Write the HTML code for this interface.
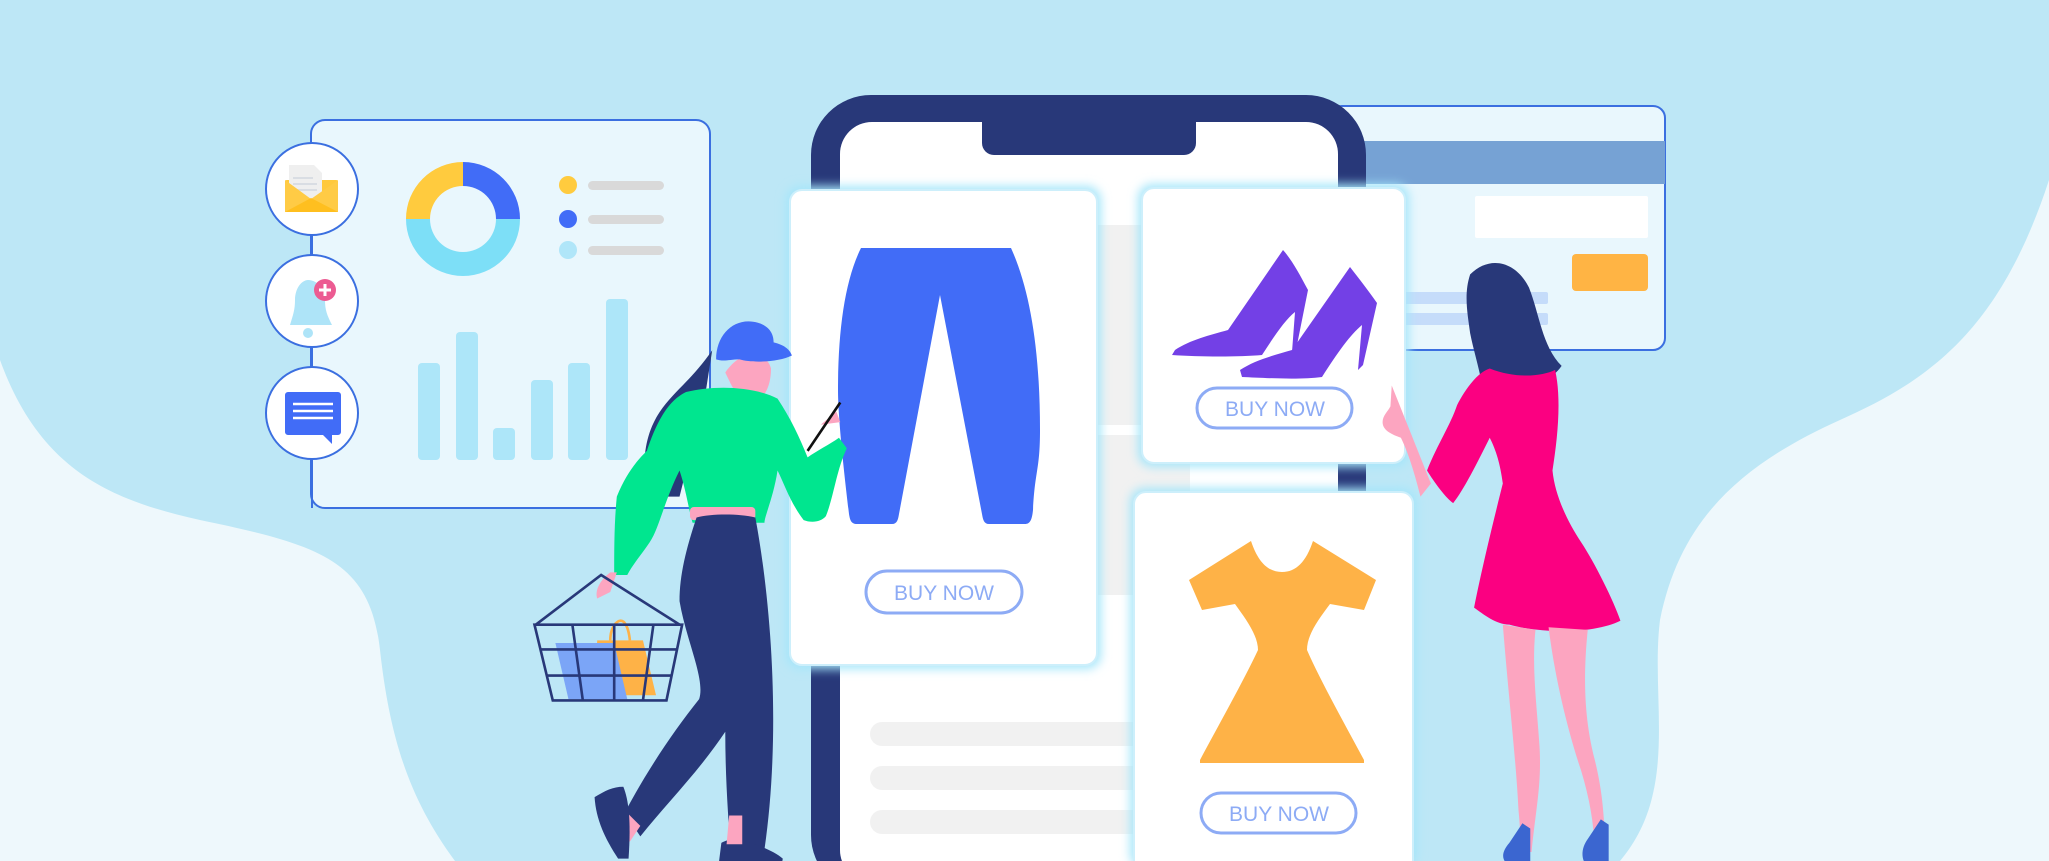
<!DOCTYPE html>
<html><head><meta charset="utf-8"><style>
html,body{margin:0;padding:0;background:#bde7f6;}
svg{display:block}
text{font-family:"Liberation Sans",sans-serif}
</style></head><body>
<svg width="2049" height="861" viewBox="0 0 2049 861" xmlns="http://www.w3.org/2000/svg">
<defs>
<filter id="glow" x="-10%" y="-10%" width="120%" height="120%"><feGaussianBlur stdDeviation="5"/></filter>
</defs>
<rect width="2049" height="861" fill="#bde7f6"/>
<path d="M0 360 C40 470 110 500 200 520 C320 545 370 560 380 650 C390 740 410 800 455 861 L0 861 Z" fill="#eef8fc"/>
<path d="M2049 180 C2000 330 1930 380 1840 420 C1740 465 1680 520 1660 620 C1650 700 1680 790 1620 861 L2049 861 Z" fill="#eef8fc"/>

<rect x="311" y="120" width="399" height="388" rx="14" fill="#e9f7fd" stroke="#3b6fe0" stroke-width="2"/>
<line x1="312" y1="189" x2="312" y2="508" stroke="#3b6fe0" stroke-width="2"/>
<g fill="#fff" stroke="#3b6fe0" stroke-width="2">
<circle cx="312" cy="189" r="46"/><circle cx="312" cy="301" r="46"/><circle cx="312" cy="413" r="46"/>
</g>
<rect x="285" y="180" width="53" height="32" rx="2" fill="#ffc93c"/>
<path d="M289 165 h25 l8 8 v27 h-33z" fill="#efefef"/>
<path d="M293 178h20M293 184h24M293 190h24" stroke="#d9dde3" stroke-width="2"/>
<path d="M285 180 L311 199 L338 180 L338 212 L285 212Z" fill="#ffcb45"/>
<path d="M285 212 L311 198 L338 212 Z" fill="#ffbf1f"/>
<path d="M290 325 C293 315 295 310 295 300 C295 288 302 280 308 280 C318 280 325 290 325 300 C325 310 327 315 332 325 Z" fill="#aee4f8"/>
<circle cx="308" cy="333" r="5" fill="#aee4f8"/>
<circle cx="325" cy="290" r="11" fill="#ec5b92"/>
<path d="M325 284v12M319 290h12" stroke="#fff" stroke-width="3"/>
<path d="M288 392 h50 a3 3 0 0 1 3 3 v37 a3 3 0 0 1 -3 3 h-6 l0 9 -9 -9 h-35 a3 3 0 0 1 -3 -3 v-37 a3 3 0 0 1 3 -3z" fill="#416cf7"/>
<path d="M293 404h40M293 411h40M293 418h40" stroke="#fff" stroke-width="2.5"/>
<g transform="translate(463,219)">
<path d="M0 -57 A57 57 0 0 1 57 0 L33 0 A33 33 0 0 0 0 -33Z" fill="#416cf7"/>
<path d="M0 -57 A57 57 0 0 0 -57 0 L-33 0 A33 33 0 0 1 0 -33Z" fill="#ffcb3e"/>
<path d="M-57 0 A57 57 0 0 0 57 0 L33 0 A33 33 0 0 1 -33 0Z" fill="#7ddff7"/>
</g>
<circle cx="568" cy="185" r="9" fill="#ffcb3e"/><circle cx="568" cy="219" r="9" fill="#416cf7"/><circle cx="568" cy="250" r="9" fill="#b0e6f9"/>
<g fill="#d9d9d9"><rect x="588" y="181" width="76" height="9" rx="4.5"/><rect x="588" y="215" width="76" height="9" rx="4.5"/><rect x="588" y="246" width="76" height="9" rx="4.5"/></g>
<g fill="#ade6f9">
<rect x="418" y="363" width="22" height="97" rx="4"/><rect x="456" y="332" width="22" height="128" rx="4"/>
<rect x="493" y="428" width="22" height="32" rx="4"/><rect x="531" y="380" width="22" height="80" rx="4"/>
<rect x="568" y="363" width="22" height="97" rx="4"/><rect x="606" y="299" width="22" height="161" rx="4"/>
</g>

<rect x="1330" y="106" width="335" height="244" rx="12" fill="#e9f7fd" stroke="#3b6fe0" stroke-width="2"/>
<rect x="1330" y="141" width="335" height="43" fill="#76a2d4"/>
<rect x="1475" y="196" width="173" height="42" rx="2" fill="#fff"/>
<rect x="1572" y="254" width="76" height="37" rx="4" fill="#ffb444"/>
<rect x="1400" y="292" width="148" height="12" rx="2" fill="#c5dcfa"/><rect x="1400" y="313" width="148" height="12" rx="2" fill="#c5dcfa"/>

<rect x="811" y="95" width="555" height="800" rx="60" fill="#283879"/>
<rect x="840" y="122" width="498" height="760" rx="32" fill="#fff"/>
<path d="M982 118 h214 v25 a12 12 0 0 1 -12 12 h-190 a12 12 0 0 1 -12 -12z" fill="#283879"/>
<rect x="1060" y="225" width="130" height="200" fill="#f1f1f1"/>
<rect x="1060" y="435" width="130" height="160" fill="#f1f1f1"/>
<g fill="#f1f1f1"><rect x="870" y="722" width="290" height="24" rx="12"/><rect x="870" y="766" width="290" height="24" rx="12"/><rect x="870" y="810" width="290" height="24" rx="12"/></g>
<rect x="1338" y="440" width="28" height="30" fill="#283879"/>

<g filter="url(#glow)" fill="#a6e6fa"><rect x="786" y="186" width="315" height="483" rx="14"/><rect x="1138" y="184" width="271" height="283" rx="14"/><rect x="1130" y="488" width="287" height="380" rx="14"/></g>
<g fill="#fff" stroke="#cdeffb" stroke-width="2">
<rect x="790" y="190" width="307" height="475" rx="12"/>
<rect x="1142" y="188" width="263" height="275" rx="12"/>
<rect x="1134" y="492" width="279" height="380" rx="12"/>
</g>
<path d="M861 248 h150 C1030 290 1040 350 1040 430 C1040 470 1035 470 1033 510 c-1 10 -3 14 -8 14 h-36 c-5 0 -6 -4 -7 -10 L940 295 L899 514 c-1 6 -2 10 -7 10 h-35 c-6 0 -7 -4 -8 -10 C845 480 838 420 838 390 C838 330 845 280 861 248Z" fill="#416cf7"/>
<path d="M1175 350 C1190 340 1210 335 1228 330 L1283 250 C1292 260 1300 275 1308 290 L1296 350 L1292 352 L1295 312 C1285 320 1275 335 1262 355 C1240 357 1200 357 1172 355 Z" fill="#7340e6"/>
<path d="M1240 370 C1255 360 1275 355 1292 350 L1350 267 C1360 280 1368 290 1377 303 L1363 365 L1358 370 L1362 325 C1350 335 1338 352 1322 377 C1300 380 1265 378 1242 377 Z" fill="#7340e6"/>
<path d="M1251 541 C1258 562 1268 572 1282 572 C1296 572 1306 562 1313 541 L1376 580 L1364 610 L1330 604 C1318 620 1307 635 1307 650 C1320 680 1348 730 1364 760 L1364 763 L1200 763 L1200 760 C1216 730 1244 680 1258 650 C1258 635 1245 618 1235 604 L1202 610 L1189 580Z" fill="#feb247"/>
<g fill="none" stroke="#8dabf5" stroke-width="3">
<rect x="866" y="571" width="156" height="42" rx="21"/>
<rect x="1197" y="388" width="155" height="40" rx="20"/>
<rect x="1201" y="793" width="155" height="40" rx="20"/>
</g>
<g fill="#8dabf5" font-size="21" text-anchor="middle">
<text x="944" y="600">BUY NOW</text>
<text x="1275" y="416">BUY NOW</text>
<text x="1279" y="821">BUY NOW</text>
</g>

<g transform="scale(1.3068)">
<!-- left woman -->
<path d="M545 268 C530 290 515 300 505 315 C495 330 490 350 495 380 L520 380 L540 300Z" fill="#283879"/>
<path d="M555 285 c5 10 8 20 20 22 c10 0 15 -12 15 -25 c-3 -12 -20 -18 -35 3z" fill="#fca5c0"/>
<path d="M548 275 c0 -20 15 -33 32 -28 c10 3 12 10 12 15 c8 2 12 5 14 10 c-10 5 -30 6 -40 3 c-8 0 -12 2 -18 0z" fill="#416cf7"/>
<path d="M525 300 C545 295 575 295 595 305 C605 320 612 335 618 350 C625 345 635 340 642 335 L648 343 C640 360 638 380 632 395 C628 400 620 400 615 398 C605 385 600 370 595 360 C592 380 585 395 585 400 L530 400 C527 390 525 375 520 360 C510 380 505 400 500 410 C495 420 485 430 480 440 L470 440 C470 420 470 400 472 380 C480 360 490 350 495 345 C505 315 515 305 525 300Z" fill="#00e68f"/>
<path d="M628 325 l12 -10 l3 8 z" fill="#fca5c0"/>
<path d="M618 345 L643 308" stroke="#111" stroke-width="2"/>
<rect x="528" y="388" width="50" height="10" rx="3" fill="#fca5c0"/>
<path d="M533 396 C545 393 565 393 578 396 C590 460 598 560 585 650 L570 680 L562 682 C558 640 555 600 555 560 C535 590 510 615 490 640 L478 622 C495 590 515 560 535 535 C540 520 525 490 520 460 C520 440 525 420 533 396Z" fill="#283879"/>
<path d="M478 620 l12 12 l-8 12 l-10 -10z" fill="#fca5c0"/>
<path d="M455 610 c8 -5 14 -8 22 -8 c4 10 6 25 4 55 l-8 0 c-10 -15 -17 -30 -18 -47z" fill="#283879"/>
<path d="M552 645 c5 -3 10 -3 15 -2 c12 3 25 8 32 14 l-2 12 l-48 0 z" fill="#283879"/>
<path d="M556 646 l12 0 l0 -22 l-10 0z" fill="#fca5c0"/>
<path d="M467 438 c-8 6 -12 14 -10 20 l10 -5 l5 -15z" fill="#fca5c0"/>
<path d="M457 490 l35 0 l10 42 l-47 0z" fill="#feb247"/>
<path d="M425 492 l45 0 l10 43 l-45 0z" fill="#7ba5f7"/>
<path d="M467 490 c0 -10 5 -15 8 -15 c3 0 6 5 7 15" fill="none" stroke="#feb247" stroke-width="2"/>
<g fill="none" stroke="#283879" stroke-width="2">
<path d="M410 478 L460 440 L520 478"/>
<path d="M409 478 H522 L510 536 H423 Z"/>
<path d="M413 497 H518 M418 517 H514"/>
<path d="M438 478 L446 536 M470 478 V536 M500 478 L492 536"/>
</g>

<!-- right woman -->
<path d="M1125 210 C1140 195 1160 200 1170 220 C1178 240 1180 265 1195 280 C1185 295 1160 300 1140 298 L1135 300 C1133 285 1128 270 1125 255 C1123 240 1120 225 1125 210Z" fill="#283879"/>
<path d="M1065 295 c8 20 20 50 30 75 l-8 10 c-5 -20 -10 -35 -15 -45 c-8 -3 -14 -6 -14 -12 c0 -5 4 -8 6 -12z" fill="#fca5c0"/>
<path d="M1140 282 C1160 290 1180 288 1190 283 C1195 305 1192 335 1188 360 C1190 380 1200 400 1210 415 C1220 430 1235 460 1240 475 C1220 485 1180 485 1155 478 C1145 478 1135 470 1128 465 C1135 430 1145 390 1150 370 C1148 355 1145 345 1140 335 C1130 355 1120 375 1112 385 C1105 380 1095 365 1092 360 C1100 340 1110 325 1115 310 C1120 300 1130 285 1140 282Z" fill="#fb0081"/>
<path d="M1150 478 C1155 540 1160 580 1162 620 C1164 640 1163 650 1165 652 L1172 652 C1175 620 1180 600 1178 570 C1176 540 1172 510 1175 482Z" fill="#fca5c0"/>
<path d="M1185 480 C1190 520 1200 560 1210 590 C1216 610 1220 630 1220 650 L1228 650 C1228 620 1225 600 1220 580 C1215 560 1210 530 1215 482Z" fill="#fca5c0"/>
<path d="M1155 645 l10 -15 l6 4 l0 27 l-18 0 c-3 -3 -5 -8 2 -16z" fill="#3b66d0"/>
<path d="M1215 642 l10 -15 l6 4 l0 30 l-18 0 c-3 -5 -3 -12 2 -19z" fill="#3b66d0"/>
</g>
</svg>
</body></html>
